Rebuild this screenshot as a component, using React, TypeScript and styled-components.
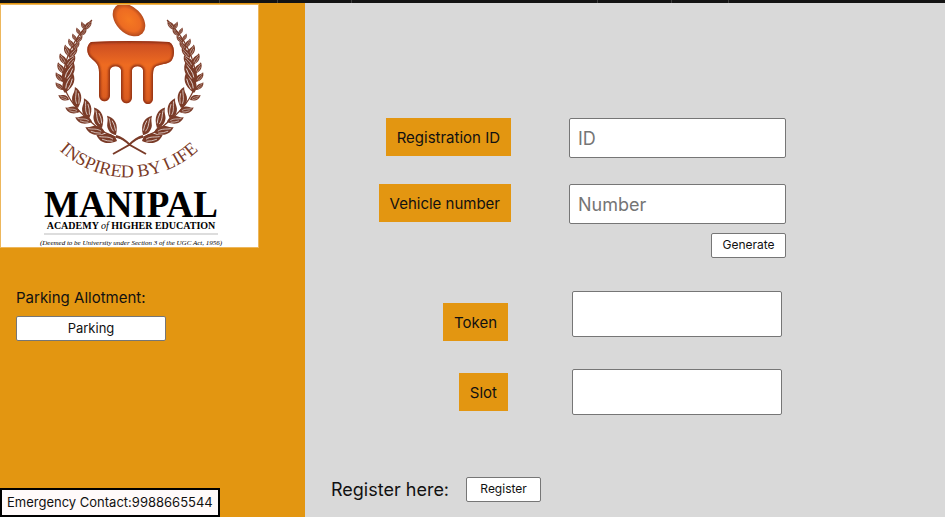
import React from "react";
import styled, { createGlobalStyle } from "styled-components";

const amber = "#e39611";
const brown = "#7a3b28";

const GlobalStyle = createGlobalStyle`
  * { box-sizing: border-box; }
  body {
    margin: 0;
    background: #d9d9d9;
    color: #111;
    font-family: Inter, "Liberation Sans", sans-serif;
  }
  button, input { font-family: inherit; color: inherit; }
`;

const Page = styled.div`
  min-height: 100vh;
  display: flex;
  flex-direction: column;
`;

const TopStrip = styled.div`
  display: flex;
  height: 3px;
  background: #131313;
`;

const StripSegment = styled.span<{ $width: number }>`
  width: ${(p) => p.$width}px;
  border-right: 1px solid #3c3c3c;
`;

const Body = styled.div`
  flex: 1;
  display: flex;
`;

const Sidebar = styled.aside`
  flex: 0 0 305px;
  display: flex;
  flex-direction: column;
  align-items: flex-start;
  background: ${amber};
`;

const LogoPanel = styled.div`
  width: 259px;
  border: 1px solid #edb75c;
  background: #fff;
  margin-top: 1px;

  svg { display: block; width: 100%; }
`;

const Allotment = styled.section`
  display: flex;
  flex-direction: column;
  align-items: flex-start;
  gap: 8px;
  margin: 40px 0 0 16px;
`;

const AllotmentTitle = styled.h2`
  margin: 0;
  font-size: 15px;
  font-weight: 400;
  line-height: 20px;
`;

const Button = styled.button<{ $width: number; $size?: number }>`
  width: ${(p) => p.$width}px;
  height: 25px;
  padding: 0 0 1px;
  border: 1px solid #767676;
  border-radius: 2px;
  background: #fff;
  font-size: ${(p) => p.$size ?? 12}px;
  line-height: 16px;
`;

const Contact = styled.p`
  margin: auto 0 0;
  padding: 4px 5px;
  border: 2px solid #000;
  background: #fffafa;
  font-size: 13px;
  line-height: 17px;
`;

const Main = styled.main`
  flex: 1;
  display: flex;
  flex-direction: column;
  padding: 115px 16px 15px 0;
`;

const Fields = styled.div`
  display: grid;
  grid-template-columns: 206px minmax(0, 217px);
  gap: 26px 58px;
  align-items: start;
`;

const Results = styled.div`
  display: grid;
  grid-template-columns: 203px minmax(0, 210px);
  column-gap: 64px;
  margin-top: 33px;
  align-items: end;
`;

const ResultLabels = styled.div`
  display: flex;
  flex-direction: column;
  align-items: flex-end;
  gap: 32px;
  padding-bottom: 4px;
`;

const ResultInputs = styled.div`
  display: flex;
  flex-direction: column;
  gap: 32px;
`;

const Label = styled.label`
  justify-self: end;
  padding: 10px 11px 8px;
  background: ${amber};
  font-size: 15px;
  line-height: 20px;
`;

const TextField = styled.input`
  width: 100%;
  height: 40px;
  padding: 1px 8px;
  border: 1px solid #767676;
  border-radius: 2px;
  background: #fff;
  font-size: 18px;

  &::placeholder { color: #757575; opacity: 1; }
`;

const ResultField = styled(TextField)`
  height: 46px;
`;

const GenerateCell = styled.div`
  grid-column: 2;
  display: flex;
  justify-content: flex-end;
  margin-top: -17px;
`;

const RegisterRow = styled.div`
  display: flex;
  align-items: center;
  gap: 17px;
  margin: auto 0 0 26px;
  font-size: 18px;
  line-height: 24px;
`;

/* Each leaf runs from its base on the stem to its tip. */
type LeafShape = [x1: number, y1: number, x2: number, y2: number];

const outerLeaves: LeafShape[] = [
  [116, 136, 95, 132], [104, 128, 84, 124], [91, 117, 74, 114],
  [79, 107, 64, 104], [68, 95, 57, 91], [62, 85, 54, 78],
  [62, 77, 54, 68], [63, 69, 56, 58], [65, 60, 58, 49],
  [69, 52, 63, 40], [72, 43, 67, 34], [75, 36, 71, 29],
  [79, 30, 75, 23], [84, 25, 80, 17],
];

const innerLeaves: LeafShape[] = [
  [115, 130, 108, 110], [101, 123, 95, 102], [88, 114, 85, 93],
  [77, 103, 76, 82], [64, 88, 73, 67], [63, 77, 74, 57],
  [65, 63, 75, 51], [68, 53, 77, 43], [72, 45, 79, 37],
  [75, 38, 82, 31], [79, 31, 86, 25], [84, 25, 91, 16],
];

function Leaf({ shape, side }: { shape: LeafShape; side: 1 | -1 }) {
  const [x1, y1, x2, y2] = shape;
  const length = Math.hypot(x2 - x1, y2 - y1);
  const angle = (Math.atan2(y2 - y1, x2 - x1) * 180) / Math.PI;
  const scale = length / 20;
  return (
    <g transform={`translate(${x1} ${y1}) rotate(${angle}) scale(${scale} ${scale * side})`}>
      <path d="M0 0C2-4 6-6 11-5C14-4 16-2 20-2C16 4 9 6 0 0Z" fill={brown} />
      <path d="M4-1C9-3 12-1 17-1M4 1Q9 2 14 1" fill="none" stroke="#fff" strokeWidth=".6" />
    </g>
  );
}

function Branch() {
  return (
    <g>
      <path
        d="M91 15C76 30 64 50 62 72C62 91 78 107 90 117C99 126 109 131 121 134"
        fill="none" stroke={brown} strokeWidth="1.2"
      />
      <path d="M115 131Q122 133 129 140L145 149" fill="none" stroke={brown} strokeWidth="2" />
      {outerLeaves.map((shape, i) => <Leaf key={i} shape={shape} side={-1} />)}
      {innerLeaves.map((shape, i) => <Leaf key={i} shape={shape} side={1} />)}
    </g>
  );
}

function Logo() {
  return (
    <svg viewBox="0 0 257 242" role="img" aria-label="Manipal Academy of Higher Education">
      <defs>
        <radialGradient id="seed" cx=".5" cy=".5" r=".58">
          <stop offset="0" stopColor="#f57921" />
          <stop offset=".6" stopColor="#ed6b22" />
          <stop offset="1" stopColor="#96391b" />
        </radialGradient>
        <linearGradient id="body" x1="0" y1="0" x2="0" y2="1">
          <stop offset="0" stopColor="#c94b22" />
          <stop offset=".38" stopColor="#ee6b21" />
          <stop offset="1" stopColor="#d75a20" />
        </linearGradient>
        <filter id="soften" x="-10%" y="-10%" width="120%" height="120%">
          <feGaussianBlur stdDeviation="1.3" />
        </filter>
        <path
          id="emblem"
          d="M90 37Q128 35 168 37C175 40 174 54 169 57C163 60 158 59 154 62Q152 64 152 70V93C152 101 142 101 142 93V65C141 60 132 60 131 65V93C130 100 121 100 120 93V65C119 60 110 60 109 65V91C108 98 99 98 98 91V67C98 59 94 57 90 53C85 49 85 40 90 37Z"
        />
        <clipPath id="emblemClip"><use href="#emblem" /></clipPath>
        <path id="motto" d="M55 142A103 103 0 0 0 201 142" />
      </defs>
      <Branch />
      <g transform="translate(257 0) scale(-1 1)"><Branch /></g>
      <ellipse cx="128" cy="15" rx="19" ry="13" transform="rotate(45 128 15)" fill="url(#seed)" />
      <use href="#emblem" fill="url(#body)" />
      <g clipPath="url(#emblemClip)">
        <use href="#emblem" fill="none" stroke="#892e18" strokeWidth="3" filter="url(#soften)" />
      </g>
      <text fill={brown} fontFamily="'Liberation Serif', serif" fontSize="18" textAnchor="middle">
        <textPath href="#motto" startOffset="50%">INSPIRED BY LIFE</textPath>
      </text>
      <g fill="#000" fontFamily="'Liberation Serif', serif" textAnchor="middle">
        <text x="130" y="212" fontSize="37" fontWeight="700">MANIPAL</text>
        <text x="130" y="224" fontSize="10" fontWeight="700">
          ACADEMY <tspan fontStyle="italic" fontWeight="400">of</tspan> HIGHER EDUCATION
        </text>
        <path d="M43 229H217" stroke="#bbb" strokeWidth="1" />
        <text x="130" y="240" fontSize="7" fontStyle="italic">
          (Deemed to be University under Section 3 of the UGC Act, 1956)
        </text>
      </g>
    </svg>
  );
}

const segments = [220, 58, 74, 246, 74, 57];

export default function App() {
  return (
    <>
      <GlobalStyle />
      <Page>
        <TopStrip>
          {segments.map((width, i) => <StripSegment key={i} $width={width} />)}
        </TopStrip>
        <Body>
          <Sidebar>
            <LogoPanel><Logo /></LogoPanel>
            <Allotment>
              <AllotmentTitle>Parking Allotment:</AllotmentTitle>
              <Button type="button" $width={150} $size={13}>Parking</Button>
            </Allotment>
            <Contact>Emergency Contact:9988665544</Contact>
          </Sidebar>
          <Main>
            <Fields>
              <Label htmlFor="registration">Registration ID</Label>
              <TextField id="registration" placeholder="ID" />
              <Label htmlFor="vehicle">Vehicle number</Label>
              <TextField id="vehicle" placeholder="Number" />
              <GenerateCell><Button type="button" $width={75}>Generate</Button></GenerateCell>
            </Fields>
            <Results>
              <ResultLabels>
                <Label htmlFor="token">Token</Label>
                <Label htmlFor="slot">Slot</Label>
              </ResultLabels>
              <ResultInputs>
                <ResultField id="token" readOnly />
                <ResultField id="slot" readOnly />
              </ResultInputs>
            </Results>
            <RegisterRow>
              <span>Register here:</span>
              <Button type="button" $width={75}>Register</Button>
            </RegisterRow>
          </Main>
        </Body>
      </Page>
    </>
  );
}
